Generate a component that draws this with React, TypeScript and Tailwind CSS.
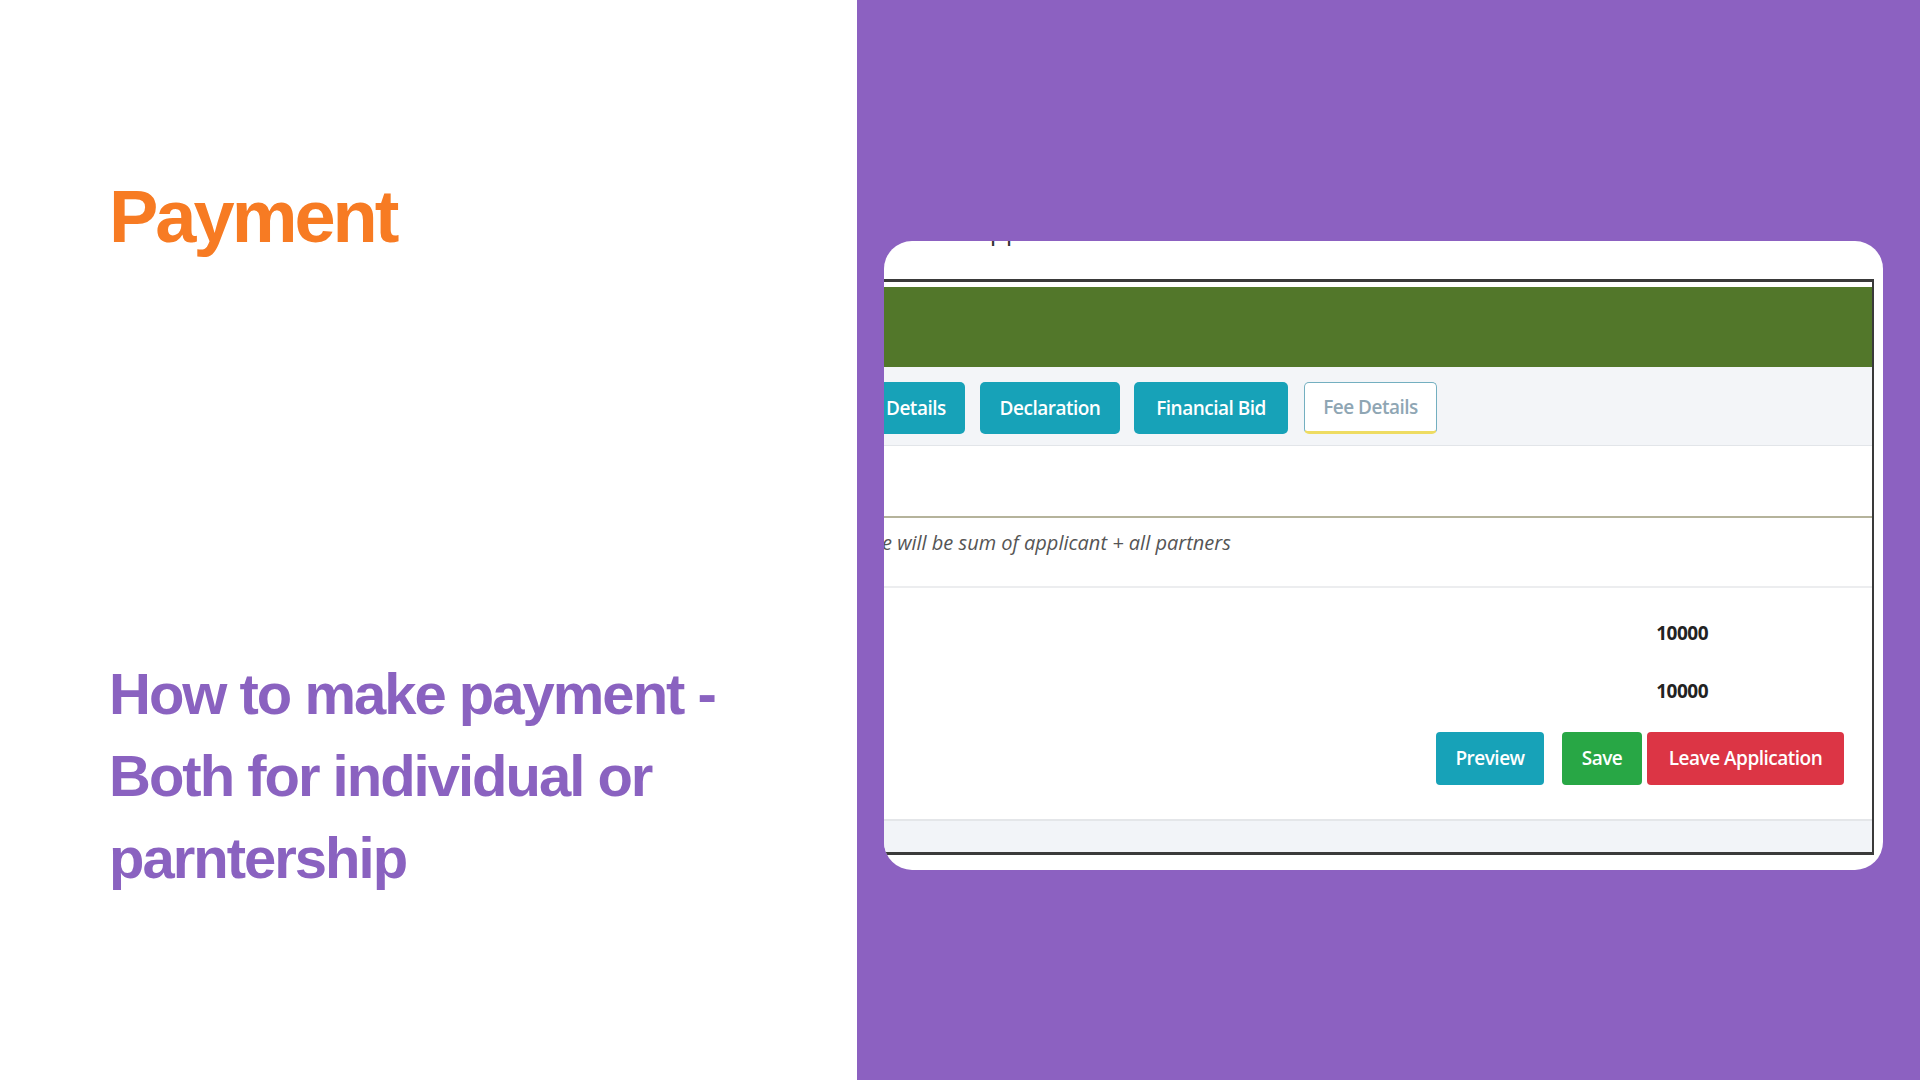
import React from "react";

const uiFont = { fontFamily: '"Open Sans", "Noto Sans", sans-serif' };

function Tab({ label, className }: { label: string; className: string }) {
  return (
    <div
      className={`h-[52px] flex items-center justify-center text-[19px] font-semibold tracking-[-0.5px] ${className}`}
    >
      {label}
    </div>
  );
}

export default function App() {
  return (
    <div
      className="w-[1920px] h-[1080px] flex overflow-hidden"
      style={{ fontFamily: '"Liberation Sans", Arial, sans-serif' }}
    >
      {/* Left panel */}
      <div className="w-[857px] h-full bg-white flex flex-col pl-[109px] pt-[180px]">
        <h1 className="text-[74px] leading-none font-bold tracking-[-3px] text-[#F77B23]">
          Payment
        </h1>
        <p className="mt-[399px] text-[58px] leading-[82px] font-bold tracking-[-2px] text-[#8A62C0]">
          How to make payment -<br />
          Both for individual or<br />
          parntership
        </p>
      </div>

      {/* Right panel */}
      <div className="flex-1 h-full bg-[#8C61C1] pl-[27px] pt-[241px]">
        <div
          className="w-[999px] h-[629px] bg-white rounded-[28px] overflow-hidden flex flex-col"
          style={uiFont}
        >
          {/* cropped heading, only its bottom visible */}
          <div className="h-[38px] relative overflow-hidden">
            <div className="absolute left-[40px] top-[-30px] text-[26px] text-[#333] whitespace-nowrap">
              Fee Application Fee
            </div>
          </div>

          {/* embedded screenshot */}
          <div className="mr-[9px] flex flex-col border-t-[3px] border-r-[2px] border-b-[3px] border-[#3a3a3a] h-[576px]">
            <div className="h-[5px] bg-white" />
            <div className="h-[80px] bg-[#52772A]" />
            <div className="h-[79px] bg-[#F3F5F8] border-b border-[#e2e5e9] flex items-start pt-[15px]">
              <Tab
                label="Details"
                className="w-[81px] bg-[#17A2B8] text-white rounded-r-[5px] justify-start pl-[2px]"
              />
              <Tab label="Declaration" className="ml-[15px] w-[140px] bg-[#17A2B8] text-white rounded-[5px]" />
              <Tab label="Financial Bid" className="ml-[14px] w-[154px] bg-[#17A2B8] text-white rounded-[5px]" />
              <Tab
                label="Fee Details"
                className="ml-[16px] w-[133px] bg-white text-[#8FA6B4] font-normal rounded-[5px] border border-[#73AFC0] border-b-[3px] border-b-[#EEDC62]"
              />
            </div>
            <div className="h-[72px] bg-white border-b-2 border-[#B5B39B]" />
            <div className="h-[70px] bg-white border-b-2 border-[#ECEDEF] flex items-start pt-[10px] overflow-hidden">
              <span className="text-[20px] italic text-[#555] whitespace-nowrap -ml-[2px]">
                e will be sum of applicant + all partners
              </span>
            </div>
            <div className="h-[233px] bg-white border-b-2 border-[#E4E6E9] flex flex-col">
              <div className="flex justify-end pr-[164px] pt-[32px]">
                <span className="text-[19px] font-bold text-[#222] tracking-[-0.5px] leading-[26px]">10000</span>
              </div>
              <div className="flex justify-end pr-[164px] pt-[32px]">
                <span className="text-[19px] font-bold text-[#222] tracking-[-0.5px] leading-[26px]">10000</span>
              </div>
              <div className="flex justify-end pr-[28px] pt-[28px]">
                <div className="w-[108px] h-[53px] rounded-[4px] bg-[#17A2B8] text-white text-[19px] font-semibold tracking-[-0.5px] flex items-center justify-center">
                  Preview
                </div>
                <div className="ml-[18px] w-[80px] h-[53px] rounded-[4px] bg-[#28A745] text-white text-[19px] font-semibold tracking-[-0.5px] flex items-center justify-center">
                  Save
                </div>
                <div className="ml-[5px] w-[197px] h-[53px] rounded-[4px] bg-[#DC3545] text-white text-[19px] font-semibold tracking-[-0.5px] flex items-center justify-center">
                  Leave Application
                </div>
              </div>
            </div>
            <div className="flex-1 bg-[#F2F4F8]" />
          </div>
        </div>
      </div>
    </div>
  );
}
